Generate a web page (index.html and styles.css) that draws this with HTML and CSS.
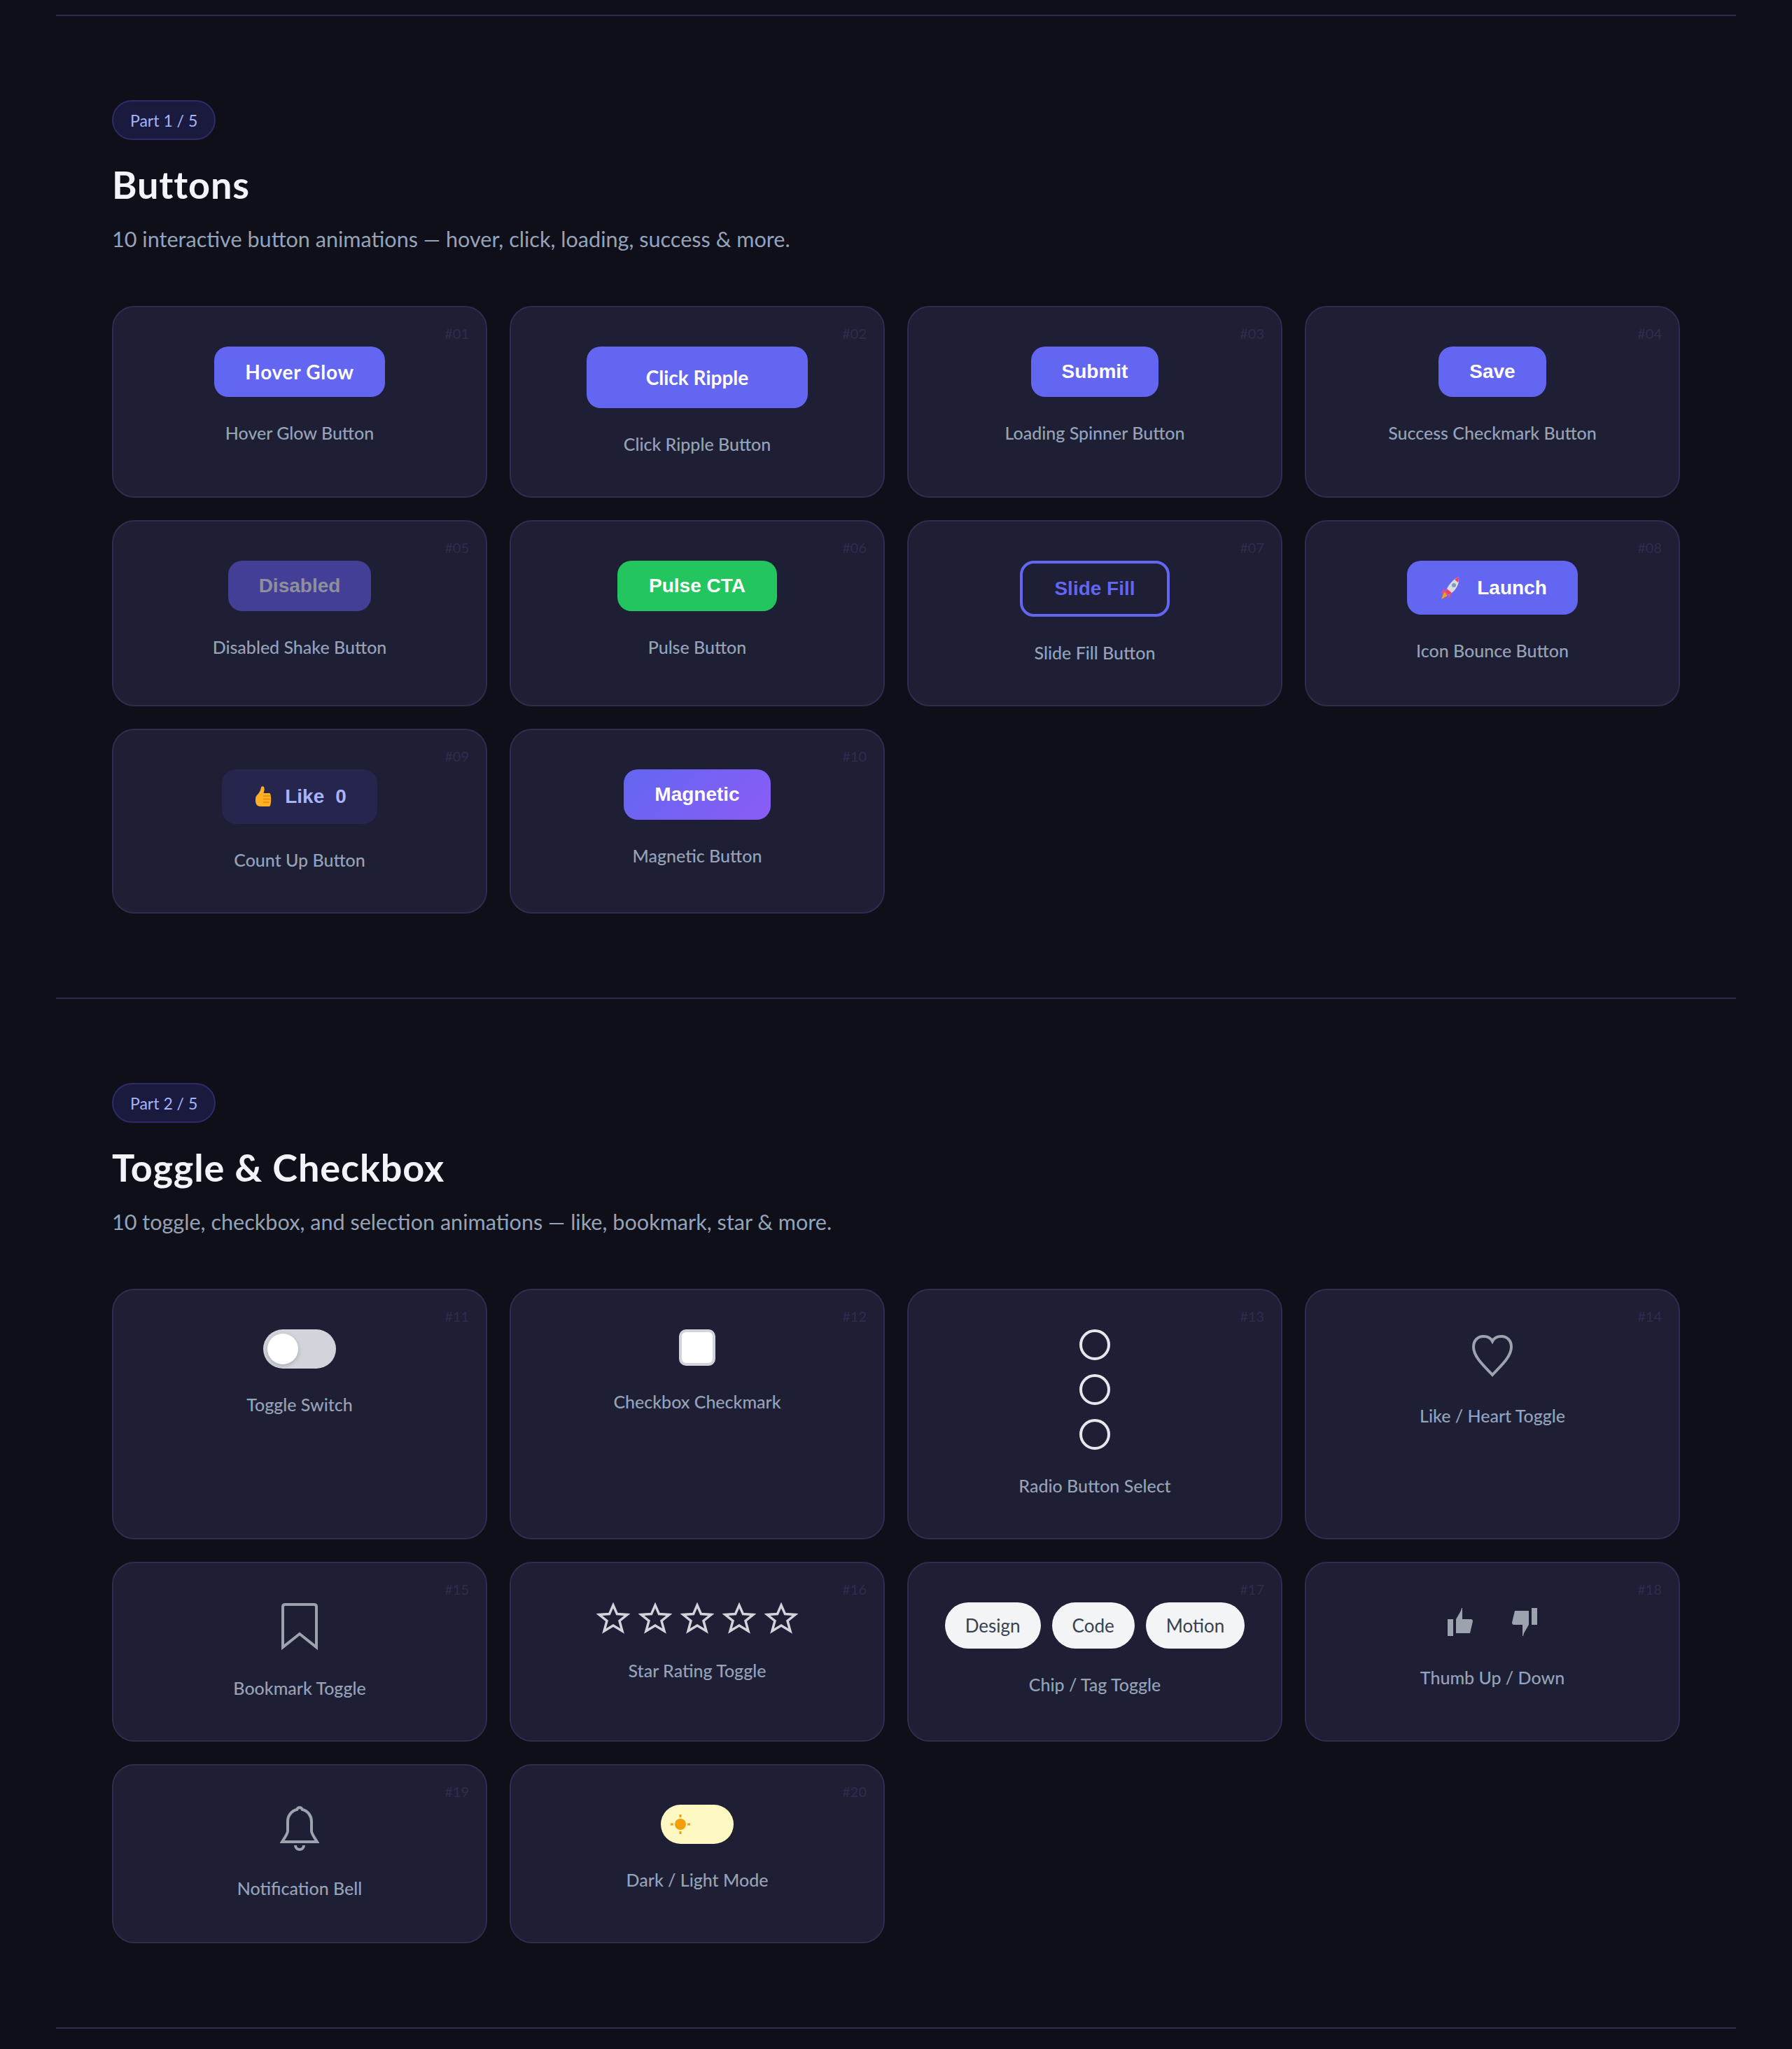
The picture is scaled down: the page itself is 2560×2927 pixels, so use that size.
FILE: index.html
```html
<!DOCTYPE html>
<html lang="en">
<head>
    <meta charset="UTF-8">
    <meta name="viewport" content="width=device-width, initial-scale=1.0">
    <title>UI Animations</title>
    <link rel="stylesheet" href="styles.css">
</head>
<body>
    <hr class="rule">

    <section class="part">
        <span class="badge">Part 1 / 5</span>
        <h2>Buttons</h2>
        <p class="sub">10 interactive button animations — hover, click, loading, success &amp; more.</p>

        <div class="grid">
            <div class="card">
                <span class="num">#01</span>
                <button class="btn btn-soft">Hover Glow</button>
                <p class="label">Hover Glow Button</p>
            </div>
            <div class="card">
                <span class="num">#02</span>
                <button class="btn btn-soft btn-ripple">Click Ripple</button>
                <p class="label">Click Ripple Button</p>
            </div>
            <div class="card">
                <span class="num">#03</span>
                <button class="btn">Submit</button>
                <p class="label">Loading Spinner Button</p>
            </div>
            <div class="card">
                <span class="num">#04</span>
                <button class="btn">Save</button>
                <p class="label">Success Checkmark Button</p>
            </div>

            <div class="card">
                <span class="num">#05</span>
                <button class="btn btn-disabled">Disabled</button>
                <p class="label">Disabled Shake Button</p>
            </div>
            <div class="card">
                <span class="num">#06</span>
                <button class="btn btn-pulse">Pulse CTA</button>
                <p class="label">Pulse Button</p>
            </div>
            <div class="card">
                <span class="num">#07</span>
                <button class="btn btn-outline">Slide Fill</button>
                <p class="label">Slide Fill Button</p>
            </div>
            <div class="card">
                <span class="num">#08</span>
                <button class="btn btn-icon">
                    <svg class="rocket" viewBox="0 0 40 37">
                        <path d="M9 24 L5 35 L14 30 Z" fill="#f59e0b"/>
                        <path d="M8 19 L5 27 L11 25 Z" fill="#ec4899"/>
                        <path d="M19 30 L14 34 L16 26 Z" fill="#ec4899"/>
                        <path d="M30 3 C23 6 17 12 13 20 L10 25 L16 29 L21 25 C28 19 31 11 30 3 Z" fill="#d9dbe3"/>
                        <path d="M30 3 C28 4 26 5 24 7 L29 11 C30 8 30 6 30 3 Z" fill="#f43f5e"/>
                        <path d="M13 20 L10 25 L16 29 L20 26 Z" fill="#f43f5e"/>
                        <circle cx="23" cy="15" r="3" fill="#7f9cb8"/>
                    </svg>
                    <span>Launch</span>
                </button>
                <p class="label">Icon Bounce Button</p>
            </div>

            <div class="card">
                <span class="num">#09</span>
                <button class="btn btn-like">
                    <svg class="thumb-emoji" viewBox="0 0 30 38">
                        <path d="M6 17 C9 14 11 11 12 6 C12.5 3.5 16 3.5 16.5 6.5 C17 9 16 12 15.5 14 L24 14 C27 14 27 32 24 33 L11 33 C7 33 4 30 4 25 C4 21 4 19 6 17 Z" fill="#fbb124"/>
                        <path d="M15 18 H25 M15 22.5 H25 M15 27 H24" stroke="#e58a0f" stroke-width="1.5" fill="none"/>
                    </svg>
                    <span>Like</span>
                    <span>0</span>
                </button>
                <p class="label">Count Up Button</p>
            </div>
            <div class="card">
                <span class="num">#10</span>
                <button class="btn btn-magnetic">Magnetic</button>
                <p class="label">Magnetic Button</p>
            </div>
        </div>
    </section>

    <hr class="rule">

    <section class="part">
        <span class="badge">Part 2 / 5</span>
        <h2>Toggle &amp; Checkbox</h2>
        <p class="sub">10 toggle, checkbox, and selection animations — like, bookmark, star &amp; more.</p>

        <div class="grid">
            <div class="card">
                <span class="num">#11</span>
                <div class="switch"><span class="knob"></span></div>
                <p class="label">Toggle Switch</p>
            </div>
            <div class="card">
                <span class="num">#12</span>
                <div class="checkbox"></div>
                <p class="label">Checkbox Checkmark</p>
            </div>
            <div class="card">
                <span class="num">#13</span>
                <div class="radios">
                    <span class="radio"></span>
                    <span class="radio"></span>
                    <span class="radio"></span>
                </div>
                <p class="label">Radio Button Select</p>
            </div>
            <div class="card">
                <span class="num">#14</span>
                <svg class="heart" viewBox="0 0 64 72">
                    <path d="M32 65 C22 54 5 40 5 25 C5 15 12 10 19 10 C25 10 30 13 32 17 C34 13 39 10 45 10 C52 10 59 15 59 25 C59 40 42 54 32 65 Z" fill="none" stroke="#9ca3af" stroke-width="4"/>
                </svg>
                <p class="label">Like / Heart Toggle</p>
            </div>

            <div class="card">
                <span class="num">#15</span>
                <svg class="bookmark" viewBox="0 0 52 71">
                    <path d="M2 64 V6 Q2 3 6 3 H46 Q50 3 50 6 V64 L26 45 Z" fill="none" stroke="#9ca3af" stroke-width="4"/>
                </svg>
                <p class="label">Bookmark Toggle</p>
            </div>
            <div class="card">
                <span class="num">#16</span>
                <div class="stars">
                    <svg class="star" viewBox="0 0 48 46"><polygon points="24,4 29.5,16.6 44,17.5 33,26.5 37,41 24,33 11,41 15,26.5 4,17.5 18.5,16.6" fill="none" stroke="#d1d5db" stroke-width="3.5"/></svg>
                    <svg class="star" viewBox="0 0 48 46"><polygon points="24,4 29.5,16.6 44,17.5 33,26.5 37,41 24,33 11,41 15,26.5 4,17.5 18.5,16.6" fill="none" stroke="#d1d5db" stroke-width="3.5"/></svg>
                    <svg class="star" viewBox="0 0 48 46"><polygon points="24,4 29.5,16.6 44,17.5 33,26.5 37,41 24,33 11,41 15,26.5 4,17.5 18.5,16.6" fill="none" stroke="#d1d5db" stroke-width="3.5"/></svg>
                    <svg class="star" viewBox="0 0 48 46"><polygon points="24,4 29.5,16.6 44,17.5 33,26.5 37,41 24,33 11,41 15,26.5 4,17.5 18.5,16.6" fill="none" stroke="#d1d5db" stroke-width="3.5"/></svg>
                    <svg class="star" viewBox="0 0 48 46"><polygon points="24,4 29.5,16.6 44,17.5 33,26.5 37,41 24,33 11,41 15,26.5 4,17.5 18.5,16.6" fill="none" stroke="#d1d5db" stroke-width="3.5"/></svg>
                </div>
                <p class="label">Star Rating Toggle</p>
            </div>
            <div class="card">
                <span class="num">#17</span>
                <div class="chips">
                    <span class="chip">Design</span>
                    <span class="chip">Code</span>
                    <span class="chip">Motion</span>
                </div>
                <p class="label">Chip / Tag Toggle</p>
            </div>
            <div class="card">
                <span class="num">#18</span>
                <div class="thumbs">
                    <svg class="thumb" viewBox="0 0 36 40">
                        <path d="M0 16 H8 V40 H0 Z M12 36 V16 L19 4 L20 0 H21 V16 H33 Q36 16 36 19 L32 36 Z" fill="#9ca3af"/>
                    </svg>
                    <svg class="thumb" viewBox="0 0 36 40">
                        <path d="M28 0 H36 V24 H28 Z M24 4 V24 L17 36 L16 40 H15 V24 H3 Q0 24 0 21 L4 4 Z" fill="#9ca3af"/>
                    </svg>
                </div>
                <p class="label">Thumb Up / Down</p>
            </div>

            <div class="card">
                <span class="num">#19</span>
                <svg class="bell" viewBox="0 0 56 68">
                    <path d="M28 4 C30 4 31 5 32 7 C40 9 45 16 45 24 V38 C45 41 51 50 53 53 H3 C5 50 11 41 11 38 V24 C11 16 16 9 24 7 C25 5 26 4 28 4 Z" fill="none" stroke="#9ca3af" stroke-width="4"/>
                    <path d="M22 58 C22 66 34 66 34 58" fill="none" stroke="#9ca3af" stroke-width="4"/>
                </svg>
                <p class="label">Notification Bell</p>
            </div>
            <div class="card">
                <span class="num">#20</span>
                <div class="mode">
                    <svg class="sun" viewBox="0 0 32 32">
                        <circle cx="16" cy="16" r="8" fill="#f59e0b"/>
                        <path d="M16 2 V6 M16 26 V30 M2 16 H6 M26 16 H30" stroke="#f59e0b" stroke-width="3"/>
                    </svg>
                </div>
                <p class="label">Dark / Light Mode</p>
            </div>
        </div>
    </section>

    <hr class="rule">
</body>
</html>
```

FILE: styles.css
```css
* {
    box-sizing: border-box;
}

body {
    margin: 0;
    padding-top: 21px;
    background-color: #0f0f1a;
    color: #94a3b8;
    font-family: Lato, "Noto Sans", sans-serif;
}

.rule {
    height: 2px;
    margin: 0 80px;
    border: none;
    background-color: #2d2d4e;
}

.part {
    padding: 120px 160px;
}

.badge {
    display: inline-block;
    height: 57px;
    padding: 0 24px;
    border: 2px solid #2d2b66;
    border-radius: 40px;
    background-color: #1a1a3e;
    color: #a5b4fc;
    font-size: 23px;
    line-height: 54px;
}

h2 {
    margin: 30px 0 0;
    color: #f1f5f9;
    font-size: 54px;
    font-weight: 700;
    line-height: 68px;
    letter-spacing: 0.9px;
}

.sub {
    margin: 21px 0 0;
    font-size: 30.6px;
    line-height: 46px;
}

.grid {
    display: grid;
    grid-template-columns: repeat(4, 1fr);
    gap: 32px;
    margin-top: 72px;
}

.card {
    position: relative;
    display: flex;
    flex-direction: column;
    align-items: center;
    gap: 32px;
    min-height: 256px;
    padding: 56px 24px;
    border: 2px solid #2d2d4e;
    border-radius: 32px;
    background-color: #1e1e35;
}

.num {
    position: absolute;
    top: 22px;
    right: 24px;
    color: #2d2d4e;
    font-size: 20px;
    line-height: 30px;
}

.label {
    margin: 0;
    font-size: 25px;
    font-weight: 500;
    line-height: 38px;
}

/* buttons */
.btn {
    display: block;
    padding: 20px 44px;
    border: none;
    border-radius: 20px;
    background-color: #6366f1;
    color: #fff;
    font-family: "Liberation Sans", sans-serif;
    font-size: 28px;
    font-weight: 700;
    line-height: 32px;
}

.btn-soft {
    font-family: Lato, "Noto Sans", sans-serif;
    letter-spacing: 0.7px;
}

.btn-ripple {
    padding: 28px 85px;
    letter-spacing: 0;
}

.btn-disabled {
    background-color: #443f96;
    color: #8f8f9c;
}

.btn-pulse {
    padding: 20px 45px;
    background-color: #22c55e;
}

.btn-outline {
    padding: 20px 45px;
    border: 4px solid #6366f1;
    background-color: transparent;
    color: #6366f1;
}

.btn-icon,
.btn-like {
    display: flex;
    align-items: center;
}

.btn-icon {
    gap: 16px;
    line-height: 37px;
}

.rocket {
    width: 40px;
    height: 37px;
}

.btn-like {
    gap: 16px;
    background-color: #25254d;
    color: #a5b4fc;
    line-height: 38px;
}

.thumb-emoji {
    width: 30px;
    height: 38px;
}

.btn-magnetic {
    background: linear-gradient(135deg, #6366f1, #8b5cf6);
}

/* toggles */
.switch {
    width: 104px;
    height: 56px;
    padding: 6px;
    border-radius: 28px;
    background-color: #d1d5db;
}

.knob {
    display: block;
    width: 44px;
    height: 44px;
    border-radius: 50%;
    background-color: #fff;
    box-shadow: 0 2px 6px rgba(0, 0, 0, 0.2);
}

.checkbox {
    width: 52px;
    height: 52px;
    border: 4px solid #d1d5db;
    border-radius: 10px;
    background-color: #fff;
}

.radios {
    display: flex;
    flex-direction: column;
    gap: 20px;
}

.radio {
    width: 44px;
    height: 44px;
    border: 4px solid #e5e7eb;
    border-radius: 50%;
}

.heart {
    width: 64px;
    height: 72px;
}

.bookmark {
    width: 52px;
    height: 71px;
}

.stars {
    display: flex;
    gap: 12px;
}

.star {
    width: 48px;
    height: 46px;
}

.chips {
    display: flex;
    gap: 16px;
}

.chip {
    padding: 0 29px;
    border-radius: 40px;
    background-color: #f3f4f6;
    color: #374151;
    font-size: 26px;
    line-height: 66px;
}

.thumbs {
    display: flex;
    gap: 56px;
    height: 56px;
    padding-top: 8px;
}

.thumb {
    width: 36px;
    height: 40px;
}

.bell {
    width: 56px;
    height: 68px;
}

.mode {
    display: flex;
    align-items: center;
    width: 104px;
    height: 56px;
    padding-left: 12px;
    border-radius: 28px;
    background-color: #fef9c3;
}

.sun {
    width: 32px;
    height: 32px;
}
```
